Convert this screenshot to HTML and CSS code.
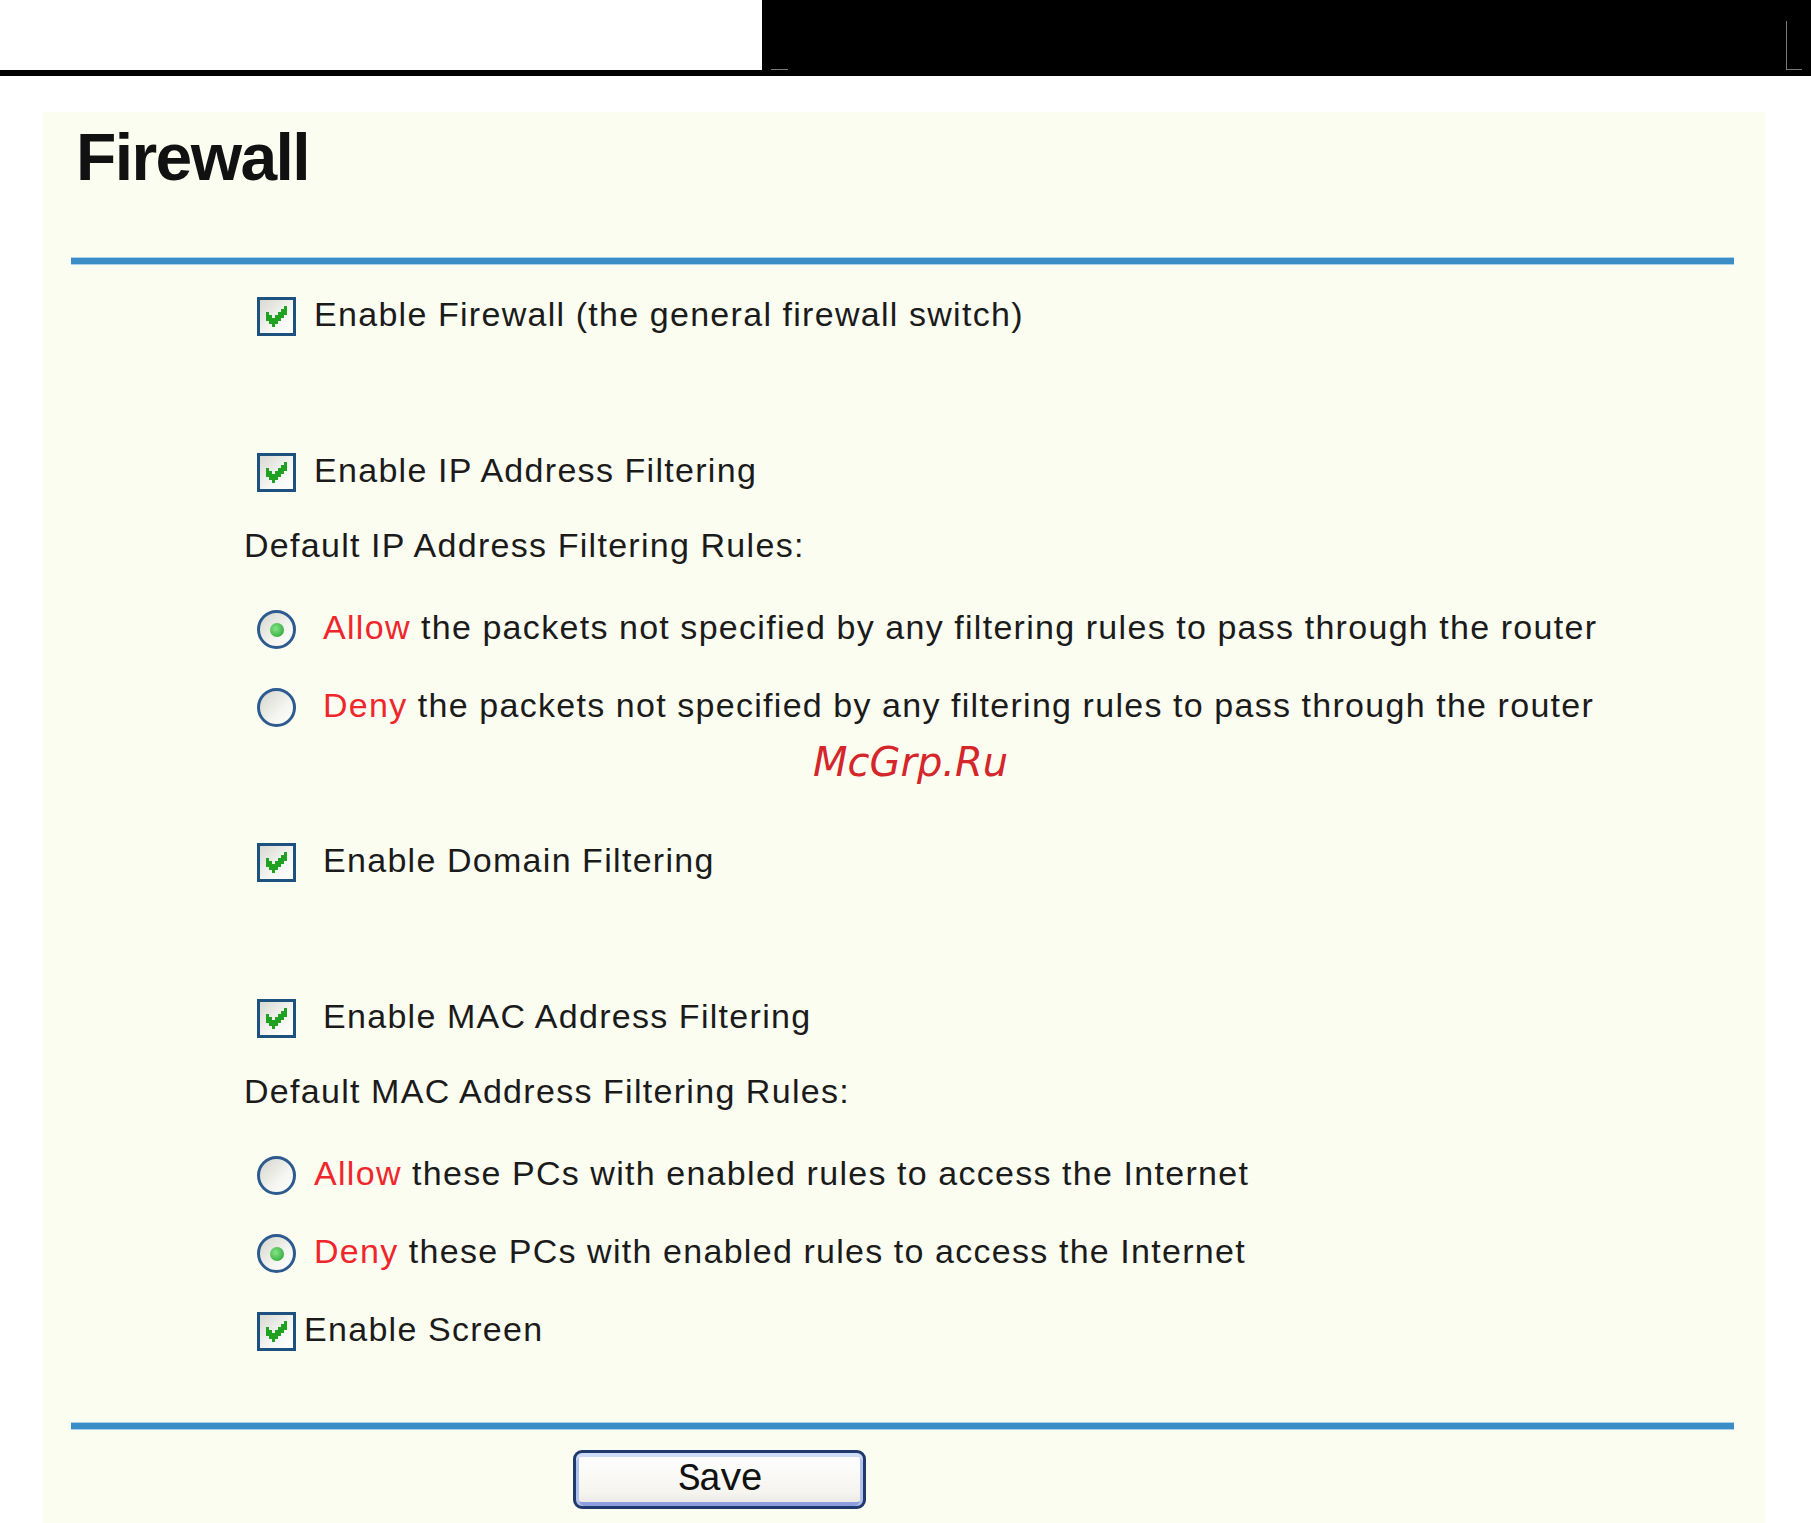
FILE: index.html
```html
<!DOCTYPE html>
<html lang="en">
<head>
  <meta charset="UTF-8" />
  <title>Firewall</title>
  <link rel="stylesheet" href="styles.css">
</head>
<body>

<div class="topbar">
  <div class="topbar-blank"></div>
  <span class="tick tick-left"></span>
  <span class="tick tick-right"></span>
</div>

<div class="panel">
  <h1>Firewall</h1>
  <div class="rule"></div>

  <form class="settings" onsubmit="return false">
    <label class="row first">
      <span class="cb"><svg viewBox="1 1 11 11" width="33" height="33"><path d="M9 3h1v1h-1zM8 4h2v1h-2zM3 5h1v1h-1zM7 5h3v1h-3zM3 6h2v1h-2zM6 6h3v1h-3zM3 7h5v1h-5zM4 8h3v1h-3zM5 9h1v1h-1z"/></svg></span>
      <span class="text gap-m">Enable Firewall (the general firewall switch)</span>
    </label>

    <label class="row group">
      <span class="cb"><svg viewBox="1 1 11 11" width="33" height="33"><path d="M9 3h1v1h-1zM8 4h2v1h-2zM3 5h1v1h-1zM7 5h3v1h-3zM3 6h2v1h-2zM6 6h3v1h-3zM3 7h5v1h-5zM4 8h3v1h-3zM5 9h1v1h-1z"/></svg></span>
      <span class="text gap-m">Enable IP Address Filtering</span>
    </label>
    <div class="note">Default IP Address Filtering Rules:</div>
    <label class="row after-note">
      <span class="rd on"></span>
      <span class="text gap-l"><em>Allow</em> the packets not specified by any filtering rules to pass through the router</span>
    </label>
    <label class="row">
      <span class="rd"></span>
      <span class="text gap-l"><em>Deny</em> the packets not specified by any filtering rules to pass through the router</span>
    </label>

    <div class="mark">McGrp.Ru</div>

    <label class="row domain">
      <span class="cb"><svg viewBox="1 1 11 11" width="33" height="33"><path d="M9 3h1v1h-1zM8 4h2v1h-2zM3 5h1v1h-1zM7 5h3v1h-3zM3 6h2v1h-2zM6 6h3v1h-3zM3 7h5v1h-5zM4 8h3v1h-3zM5 9h1v1h-1z"/></svg></span>
      <span class="text gap-l">Enable Domain Filtering</span>
    </label>

    <label class="row group">
      <span class="cb"><svg viewBox="1 1 11 11" width="33" height="33"><path d="M9 3h1v1h-1zM8 4h2v1h-2zM3 5h1v1h-1zM7 5h3v1h-3zM3 6h2v1h-2zM6 6h3v1h-3zM3 7h5v1h-5zM4 8h3v1h-3zM5 9h1v1h-1z"/></svg></span>
      <span class="text gap-l">Enable MAC Address Filtering</span>
    </label>
    <div class="note">Default MAC Address Filtering Rules:</div>
    <label class="row after-note">
      <span class="rd"></span>
      <span class="text gap-m"><em>Allow</em> these PCs with enabled rules to access the Internet</span>
    </label>
    <label class="row">
      <span class="rd on"></span>
      <span class="text gap-m"><em>Deny</em> these PCs with enabled rules to access the Internet</span>
    </label>
    <label class="row">
      <span class="cb"><svg viewBox="1 1 11 11" width="33" height="33"><path d="M9 3h1v1h-1zM8 4h2v1h-2zM3 5h1v1h-1zM7 5h3v1h-3zM3 6h2v1h-2zM6 6h3v1h-3zM3 7h5v1h-5zM4 8h3v1h-3zM5 9h1v1h-1z"/></svg></span>
      <span class="text gap-s">Enable Screen</span>
    </label>

    <div class="rule bottom"></div>
    <button type="submit" class="save">Save</button>
  </form>
</div>

</body>
</html>
```

FILE: styles.css
```css
body {
  margin: 0;
  background: #fff;
  font-family: "Liberation Sans", Arial, sans-serif;
  color: #1b1b1b;
}
.topbar {
  position: relative;
  height: 76px;
  background: #000;
}
.topbar-blank {
  width: 762px;
  height: 70px;
  background: #fff;
}
.tick {
  position: absolute;
  box-sizing: border-box;
}
.tick-left {
  left: 771px;
  top: 69px;
  width: 17px;
  height: 1px;
  background: #7a7a7a;
}
.tick-right {
  left: 1786px;
  top: 21px;
  width: 16px;
  height: 49px;
  border-left: 1px solid #7a7a7a;
  border-bottom: 1px solid #7a7a7a;
}
.panel {
  margin: 36px 46px 0 43px;
  padding: 12px 31px 14px 28px;
  background: #fbfdf1;
}
h1 {
  margin: 0 0 0 5px;
  font-size: 66px;
  line-height: 66px;
  font-weight: bold;
  letter-spacing: -1.6px;
  color: #111;
}
.rule {
  height: 8px;
  margin-top: 67px;
  background: linear-gradient(#a9d1ea 0 1px, #3b8dc6 1px 7px, #a9d1ea 7px);
}
.rule.bottom {
  margin-top: 71px;
}
.settings {
  margin: 0;
  font-size: 34px;
  letter-spacing: 1.3px;
  word-spacing: -0.5px;
}
.row {
  display: flex;
  align-items: center;
  height: 39px;
  line-height: 39px;
  margin-top: 39px;
  padding-left: 186px;
  white-space: nowrap;
}
.row.first {
  margin-top: 32px;
}
.row.group {
  margin-top: 117px;
}
.row.after-note {
  margin-top: 44px;
}
.row.domain {
  margin-top: 58px;
}
.note {
  height: 39px;
  line-height: 37px;
  margin-top: 35px;
  padding-left: 173px;
  white-space: nowrap;
}
.text {
  margin-bottom: 4px;
}
.text.gap-s { margin-left: 8px; }
.text.gap-m { margin-left: 18px; }
.text.gap-l { margin-left: 27px; }
.text em {
  font-style: normal;
  color: #f0262d;
}
.cb {
  display: block;
  flex: none;
  width: 33px;
  height: 33px;
  border: 3px solid #1c5180;
  background: linear-gradient(135deg, #d9d9d2, #f6f6f3 60%, #fff);
}
.cb svg {
  display: block;
  fill: #21a121;
  shape-rendering: crispEdges;
}
.rd {
  display: flex;
  flex: none;
  align-items: center;
  justify-content: center;
  width: 33px;
  height: 33px;
  border: 3px solid #2d5b8f;
  border-radius: 50%;
  background: linear-gradient(135deg, #d6d6cf, #f4f4f0 60%, #fff);
}
.rd.on::after {
  content: "";
  width: 14px;
  height: 14px;
  border-radius: 50%;
  background: radial-gradient(circle at 40% 40%, #86e486, #1f9d2b);
}
.mark {
  height: 46px;
  line-height: 46px;
  margin: 12px 0 0 742px;
  font-family: "DejaVu Sans", sans-serif;
  font-style: italic;
  font-size: 40px;
  letter-spacing: 0;
  word-spacing: 0;
  color: #d4262b;
}
.save {
  display: block;
  box-sizing: border-box;
  width: 293px;
  height: 59px;
  margin: 20px 0 0 502px;
  padding: 0;
  border: 3px solid #22396e;
  border-radius: 9px;
  background: linear-gradient(#fff, #f5f4ef 75%, #e6e5df);
  box-shadow: inset 0 4px #cfdcf7, inset 3px 0 #b1c2ee, inset -3px 0 #b1c2ee, inset 0 -4px #8e9de0;
  font-family: "Liberation Mono", "Courier New", monospace;
  font-size: 38px;
  letter-spacing: -2px;
  color: #111;
}
```
